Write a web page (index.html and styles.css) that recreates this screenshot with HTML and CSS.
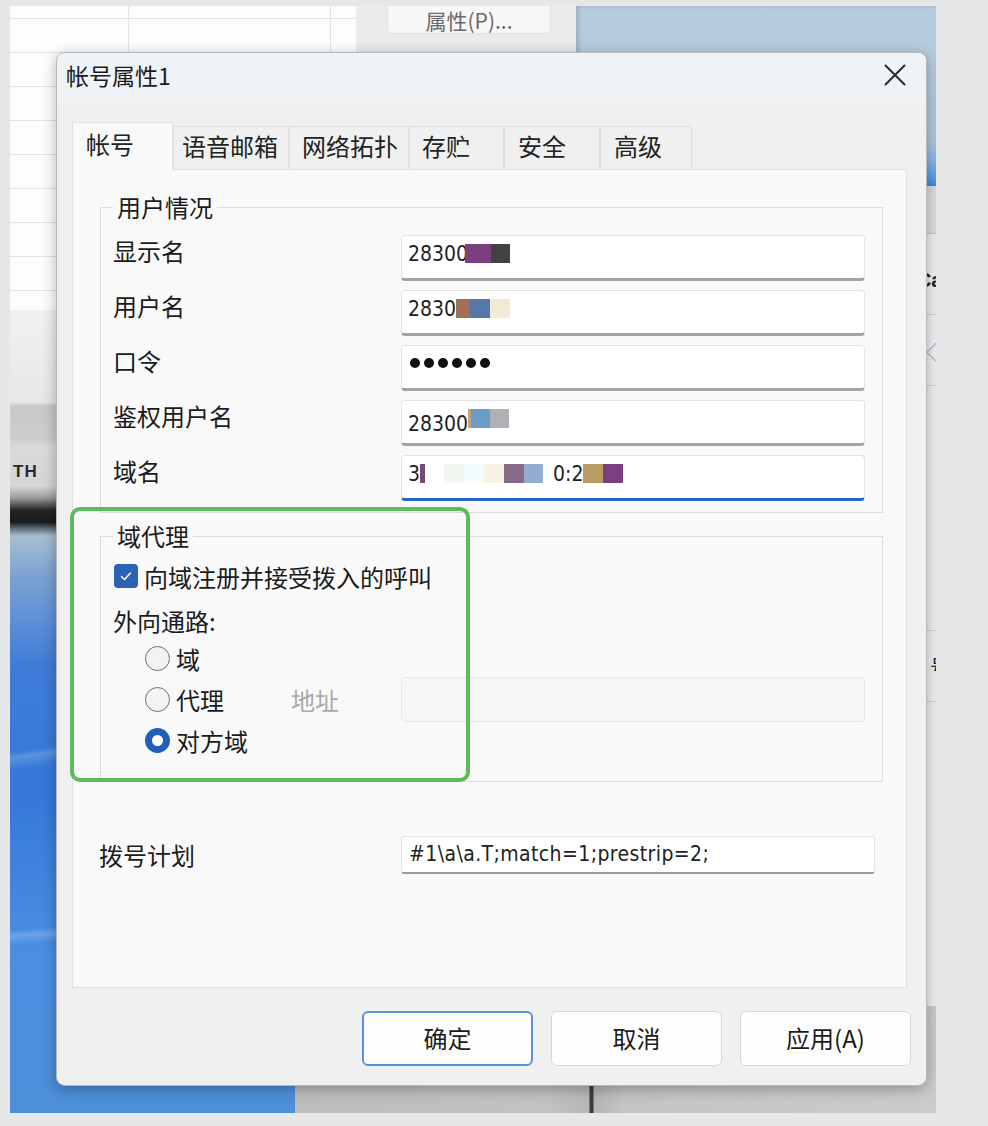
FILE: index.html
```html
<!DOCTYPE html>
<html lang="zh-CN">
<head>
<meta charset="utf-8">
<title>帐号属性1</title>
<link rel="stylesheet" href="styles.css">
</head>
<body>
<div class="screen">
  <div class="bg-sheet"></div>
  <div class="bg-props"><div class="bg-propbtn">属性(P)...</div></div>
  <div class="bg-sky"></div>
  <div class="bg-rightpane">
    <div class="rp-band"></div>
    <div class="rp-row rp-row--first"><span class="rp-text">Cal</span></div>
    <div class="rp-row rp-row--spin"><span class="rp-spin">◇</span></div>
    <div class="rp-row rp-row--tall"></div>
    <div class="rp-row"><span class="rp-text rp-text--cjk">号</span></div>
  </div>
  <div class="bg-photo"><span class="bg-th">TH</span></div>
  <div class="bg-wallpaper"></div>
  <div class="bg-bottom"></div>

  <div class="dialog">
    <div class="titlebar">
      <span class="title">帐号属性1</span>
      <svg class="close" viewBox="0 0 22 22" width="22" height="22"><path d="M1.5 1.5L20.5 20.5M20.5 1.5L1.5 20.5" stroke="#2b2b2b" stroke-width="2" fill="none" stroke-linecap="round"/></svg>
    </div>
    <div class="dialog-body">
      <div class="tabs">
        <div class="tab tab--active tab-account">帐号</div>
        <div class="tab tab-voicemail">语音邮箱</div>
        <div class="tab tab-network">网络拓扑</div>
        <div class="tab tab-storage">存贮</div>
        <div class="tab tab-security">安全</div>
        <div class="tab tab-advanced">高级</div>
      </div>
      <div class="panel">
        <fieldset class="group group--user">
          <legend>用户情况</legend>
          <div class="form-rows">
            <div class="form-row">
              <span class="label">显示名</span>
              <div class="input">28300<span class="blk blk--purple w26 tuck"></span><span class="blk blk--dark w19"></span></div>
            </div>
            <div class="form-row">
              <span class="label">用户名</span>
              <div class="input">2830<span class="blk blk--brown w14"></span><span class="blk blk--blue w20"></span><span class="blk blk--cream w20"></span></div>
            </div>
            <div class="form-row">
              <span class="label">口令</span>
              <div class="input input--pw"><span class="dot"></span><span class="dot"></span><span class="dot"></span><span class="dot"></span><span class="dot"></span><span class="dot"></span></div>
            </div>
            <div class="form-row">
              <span class="label">鉴权用户名</span>
              <div class="input">28300<span class="blk-raised"><span class="blk blk--tan w3"></span><span class="blk blk--sky w19"></span><span class="blk blk--gray w19"></span></span></div>
            </div>
            <div class="form-row">
              <span class="label">域名</span>
              <div class="input input--focus">3<span class="blk blk--plum w4"></span><span class="blk blk--white w19"></span><span class="blk blk--mint w20"></span><span class="blk blk--ice w20"></span><span class="blk blk--ivory w20"></span><span class="blk blk--mauve w20"></span><span class="blk blk--steel w19"></span><span class="gap"></span>0:2<span class="blk blk--gold w20"></span><span class="blk blk--violet w20"></span></div>
            </div>
          </div>
        </fieldset>

        <fieldset class="group group--proxy">
          <legend>域代理</legend>
          <div class="check-row">
            <span class="check"><svg viewBox="0 0 24 24" width="24" height="24"><path d="M7.5 12.5l3 3 6-6.5" stroke="#fff" stroke-width="1.5" fill="none" stroke-linecap="round" stroke-linejoin="round"/></svg></span>
            <span class="text">向域注册并接受拨入的呼叫</span>
          </div>
          <div class="route-label">外向通路:</div>
          <div class="radios">
            <div class="radio-row"><span class="radio-item"><span class="radio"></span>域</span></div>
            <div class="radio-row">
              <span class="radio-item"><span class="radio"></span>代理</span>
              <span class="addr-label">地址</span>
              <div class="input input--disabled"></div>
            </div>
            <div class="radio-row"><span class="radio-item"><span class="radio radio--on"></span>对方域</span></div>
          </div>
        </fieldset>

        <div class="dial-row">
          <span class="label label--dial">拨号计划</span>
          <div class="input input--dial">#1\a\a.T;match=1;prestrip=2;</div>
        </div>
      </div>
      <div class="buttons">
        <div class="btn btn--default">确定</div>
        <div class="btn">取消</div>
        <div class="btn">应用(A)</div>
      </div>
    </div>
  </div>

  <div class="annotation"></div>
</div>
</body>
</html>
```
FILE: styles.css
```css
html, body {
  margin: 0;
  padding: 0;
}
body {
  background: #e6e7e9;
  font-family: "Noto Sans CJK SC", "Noto Sans", sans-serif;
  color: #1b1b1b;
}

.screen {
  position: relative;
  width: 926px;
  height: 1107px;
  margin: 6px 0 0 10px;
  overflow: hidden;
  background: #c6c6c6;
}

/* ---------- background desktop ---------- */
.bg-sheet {
  position: absolute;
  left: 0;
  top: 0;
  width: 346px;
  height: 304px;
  background-color: #fdfdfd;
  background-image:
    repeating-linear-gradient(180deg, transparent 0, transparent 12px, #e4e4e4 12px, #e4e4e4 13px, transparent 13px, transparent 34px),
    linear-gradient(90deg, transparent 118px, #e4e4e4 118px, #e4e4e4 119px, transparent 119px),
    linear-gradient(90deg, transparent 320px, #e4e4e4 320px, #e4e4e4 321px, transparent 321px);
  border-bottom: 1px solid #cfcfcf;
}
.bg-props {
  position: absolute;
  left: 346px;
  top: 0;
  width: 220px;
  height: 320px;
  background: #ebebeb;
}
.bg-propbtn {
  margin: -2px 0 0 31px;
  width: 164px;
  height: 30px;
  box-sizing: border-box;
  border: 1px solid #e2e2e2;
  border-radius: 0 0 5px 5px;
  background: #f7f7f7;
  color: #6a6a6a;
  font-size: 21px;
  line-height: 30px;
  text-align: center;
}
.bg-sky {
  position: absolute;
  left: 566px;
  top: 0;
  width: 360px;
  height: 180px;
  background: linear-gradient(180deg, #b9cde0 0%, #b0c6dc 75%, #7fb0e4 88%, #3f8ee2 100%);
  box-shadow: inset 3px 0 4px rgba(0, 0, 0, 0.15);
}
.bg-rightpane {
  position: absolute;
  left: 580px;
  top: 180px;
  right: 0;
  bottom: 0;
  background: #efefef;
  display: flex;
  flex-direction: column;
}
.rp-band {
  height: 47px;
  flex: none;
  background: #dcdcdc;
  border-bottom: 1px solid #c4c4c4;
}
.rp-row {
  height: 70px;
  flex: none;
  border-bottom: 1px solid #d0d0d0;
  display: flex;
  align-items: center;
  justify-content: flex-end;
}
.rp-row--first {
  height: 81px;
  padding-top: 12px;
  box-sizing: border-box;
}
.rp-row--tall {
  height: 244px;
}
.rp-text {
  font-family: "Liberation Sans", sans-serif;
  font-weight: bold;
  font-size: 20px;
  color: #222;
  margin-right: -12px;
}
.rp-text--cjk {
  font-family: "Noto Sans CJK SC", sans-serif;
  font-weight: normal;
  margin-right: -14px;
}
.rp-spin {
  color: #8ab0d8;
  font-size: 22px;
  margin-right: -12px;
}
.bg-photo {
  position: absolute;
  left: 0;
  top: 304px;
  width: 46px;
  height: 226px;
  box-sizing: border-box;
  padding: 148px 0 0 3px;
  background: linear-gradient(180deg, #f1f1f1 0, #e7e7e7 92px, #c8c8c8 96px, #cdcdcd 128px, #dadada 138px, #d6d6d6 176px, #9a9a9a 188px, #262626 200px, #1a1a1a 212px, #6d7e90 220px, #a9bdd1 226px);
}
.bg-th {
  font-family: "Liberation Sans", sans-serif;
  font-weight: bold;
  font-size: 17px;
  color: #2a2a2a;
  letter-spacing: 1px;
}
.bg-wallpaper {
  position: absolute;
  left: 0;
  top: 530px;
  width: 285px;
  bottom: 0;
  background:
    linear-gradient(172deg, transparent 35%, rgba(255, 255, 255, 0.18) 36%, transparent 38%),
    linear-gradient(176deg, transparent 66%, rgba(255, 255, 255, 0.2) 67%, transparent 68.5%),
    linear-gradient(180deg, #a9bed2 0, #7ba2d4 40px, #3f7cd8 130px, #3578d9 260px, #4b8fe3 420px, #4e8fd8 580px);
}
.bg-bottom {
  position: absolute;
  left: 285px;
  top: 1000px;
  right: 0;
  bottom: 0;
  background: linear-gradient(90deg, #bdbdbd 0, #c2c2c2 250px, #b7b7b7 294px, #3c3c3c 295px, #3c3c3c 298px, #b4b4b4 299px, #c4c4c4 330px, #cbcbcb 100%);
}

/* ---------- dialog ---------- */
.dialog {
  position: absolute;
  left: 46px;
  top: 46px;
  width: 871px;
  height: 1034px;
  box-sizing: border-box;
  border: 1px solid #b9b9b9;
  border-radius: 9px;
  background: #f0f0f0;
  box-shadow: 0 3px 14px rgba(0, 0, 0, 0.3);
  display: flex;
  flex-direction: column;
  overflow: hidden;
}
.titlebar {
  height: 49px;
  flex: none;
  box-sizing: border-box;
  background: #eef3f8;
  display: flex;
  align-items: center;
  justify-content: space-between;
  padding: 0 20px 5px 9px;
}
.title {
  font-size: 23px;
  line-height: 30px;
  color: #1a1a1a;
}
.close {
  display: block;
}
.dialog-body {
  flex: 1;
  display: flex;
  flex-direction: column;
  padding: 20px 19px 19px 15px;
  min-height: 0;
}

.tabs {
  display: flex;
  align-items: flex-end;
  height: 47px;
  flex: none;
}
.tab {
  height: 43px;
  line-height: 37px;
  box-sizing: border-box;
  border: 1px solid #e1e1e1;
  border-bottom: none;
  background: #f0f0f0;
  padding-left: 12px;
  font-size: 24px;
  color: #222;
  white-space: nowrap;
}
.tab--active {
  height: 48px;
  line-height: 41px;
  margin-bottom: -1px;
  background: #f9f9f9;
  position: relative;
  z-index: 1;
  padding-left: 13px;
}
.tab-account { width: 101px; }
.tab-voicemail { width: 116px; padding-left: 8px; }
.tab-network { width: 120px; }
.tab-storage { width: 95px; }
.tab-security { width: 96px; padding-left: 13px; }
.tab-advanced { width: 92px; padding-left: 13px; }

.panel {
  flex: 1;
  min-height: 0;
  border: 1px solid #e1e1e1;
  background: #f9f9f9;
  padding: 22px 23px 0 27px;
}

.group {
  margin: 0;
  border: 1px solid #dcdcdc;
  padding: 13px 17px 11px 12px;
  min-width: 0;
}
.group legend {
  padding: 0 4px;
  font-size: 24px;
  line-height: 30px;
  color: #1b1b1b;
}
.group--proxy {
  margin-top: 8px;
  padding: 9px 17px 20px 12px;
}

.form-rows {
  display: flex;
  flex-direction: column;
  gap: 9px;
}
.form-row {
  display: flex;
  height: 46px;
}
.label {
  width: 288px;
  flex: none;
  font-size: 24px;
  line-height: 32px;
  color: #1b1b1b;
}
.input {
  width: 464px;
  height: 46px;
  box-sizing: border-box;
  border: 1px solid #e4e4e4;
  border-bottom: 3px solid #a3a3a3;
  border-radius: 4px;
  background: #fff;
  padding: 0 6px;
  font-family: "DejaVu Sans Condensed", "DejaVu Sans", sans-serif;
  font-stretch: condensed;
  font-size: 21px;
  line-height: 36px;
  color: #222;
  white-space: nowrap;
  overflow: hidden;
}
.input--focus {
  border-bottom: 3px solid #2a67c0;
}
.input--pw {
  display: flex;
  align-items: center;
  gap: 4px;
  height: 46px;
  padding-left: 8px;
  padding-bottom: 8px;
}
.dot {
  width: 10px;
  height: 10px;
  border-radius: 50%;
  background: #111;
}

/* privacy mosaic blocks */
.blk {
  display: inline-block;
  height: 19px;
  vertical-align: -2px;
}
.tuck { margin-left: -3px; }
.blk-raised {
  display: inline-block;
  vertical-align: 5px;
}
.gap {
  display: inline-block;
  width: 10px;
}
.w3 { width: 3px; }
.w4 { width: 5px; }
.w14 { width: 14px; }
.w19 { width: 19px; }
.w20 { width: 20px; }
.w26 { width: 26px; }
.blk--purple { background: #7b3f7e; }
.blk--dark { background: #424242; }
.blk--brown { background: #a27154; }
.blk--blue { background: #5677a7; }
.blk--cream { background: #f3ead6; }
.blk--tan { background: #c4a474; }
.blk--sky { background: #6a9cc5; }
.blk--gray { background: #b1b1b5; }
.blk--plum { background: #7d4a70; }
.blk--white { background: #ffffff; }
.blk--mint { background: #f1f8f0; }
.blk--ice { background: #f4fbfc; }
.blk--ivory { background: #f6f2e4; }
.blk--mauve { background: #866a88; }
.blk--steel { background: #93acd0; }
.blk--gold { background: #b89c63; }
.blk--violet { background: #7a4080; }

/* proxy group */
.check-row {
  display: flex;
  align-items: center;
  gap: 6px;
  height: 32px;
  padding-left: 1px;
}
.check {
  width: 24px;
  height: 24px;
  border-radius: 4px;
  background: #2c63b5;
  display: flex;
}
.text {
  font-size: 24px;
}
.route-label {
  margin-top: 14px;
  height: 32px;
  line-height: 30px;
  font-size: 24px;
}
.radios {
  display: flex;
  flex-direction: column;
}
.radio-row {
  display: flex;
  align-items: center;
  height: 41px;
}
.radio-item {
  width: 178px;
  flex: none;
  box-sizing: border-box;
  padding-left: 32px;
  display: flex;
  align-items: center;
  gap: 6px;
  font-size: 24px;
}
.radio {
  width: 25px;
  height: 25px;
  box-sizing: border-box;
  border-radius: 50%;
  border: 1.5px solid #6f6f6f;
  background: #f3f3f3;
  flex: none;
}
.radio--on {
  border: 7.5px solid #2160b6;
  background: #fff;
}
.addr-label {
  width: 110px;
  flex: none;
  font-size: 24px;
  color: #a9a9a9;
}
.input--disabled {
  height: 45px;
  margin: -2px 0;
  background: #f6f6f6;
  border: 1px solid #e7e7e7;
}

.dial-row {
  display: flex;
  height: 38px;
  margin: 54px 0 0 -1px;
}
.label--dial {
  width: 302px;
  line-height: 38px;
}
.input--dial {
  width: 474px;
  height: 38px;
  line-height: 34px;
  padding-left: 7px;
  letter-spacing: 0.4px;
  border-bottom: 2px solid #9c9c9c;
  border-radius: 3px;
}

/* buttons */
.buttons {
  display: flex;
  justify-content: flex-end;
  gap: 18px;
  margin: 23px -4px 0 0;
  flex: none;
}
.btn {
  width: 171px;
  height: 55px;
  box-sizing: border-box;
  border: 1px solid #d6d6d6;
  border-radius: 6px;
  background: #fdfdfd;
  font-size: 24px;
  line-height: 51px;
  text-align: center;
  color: #1b1b1b;
}
.btn--default {
  border: 2px solid #5596d8;
  line-height: 49px;
}

/* green annotation drawn over the screenshot */
.annotation {
  position: absolute;
  left: 60px;
  top: 501px;
  width: 400px;
  height: 275px;
  box-sizing: border-box;
  border: 4px solid #5cbb5a;
  border-radius: 10px;
}
```
